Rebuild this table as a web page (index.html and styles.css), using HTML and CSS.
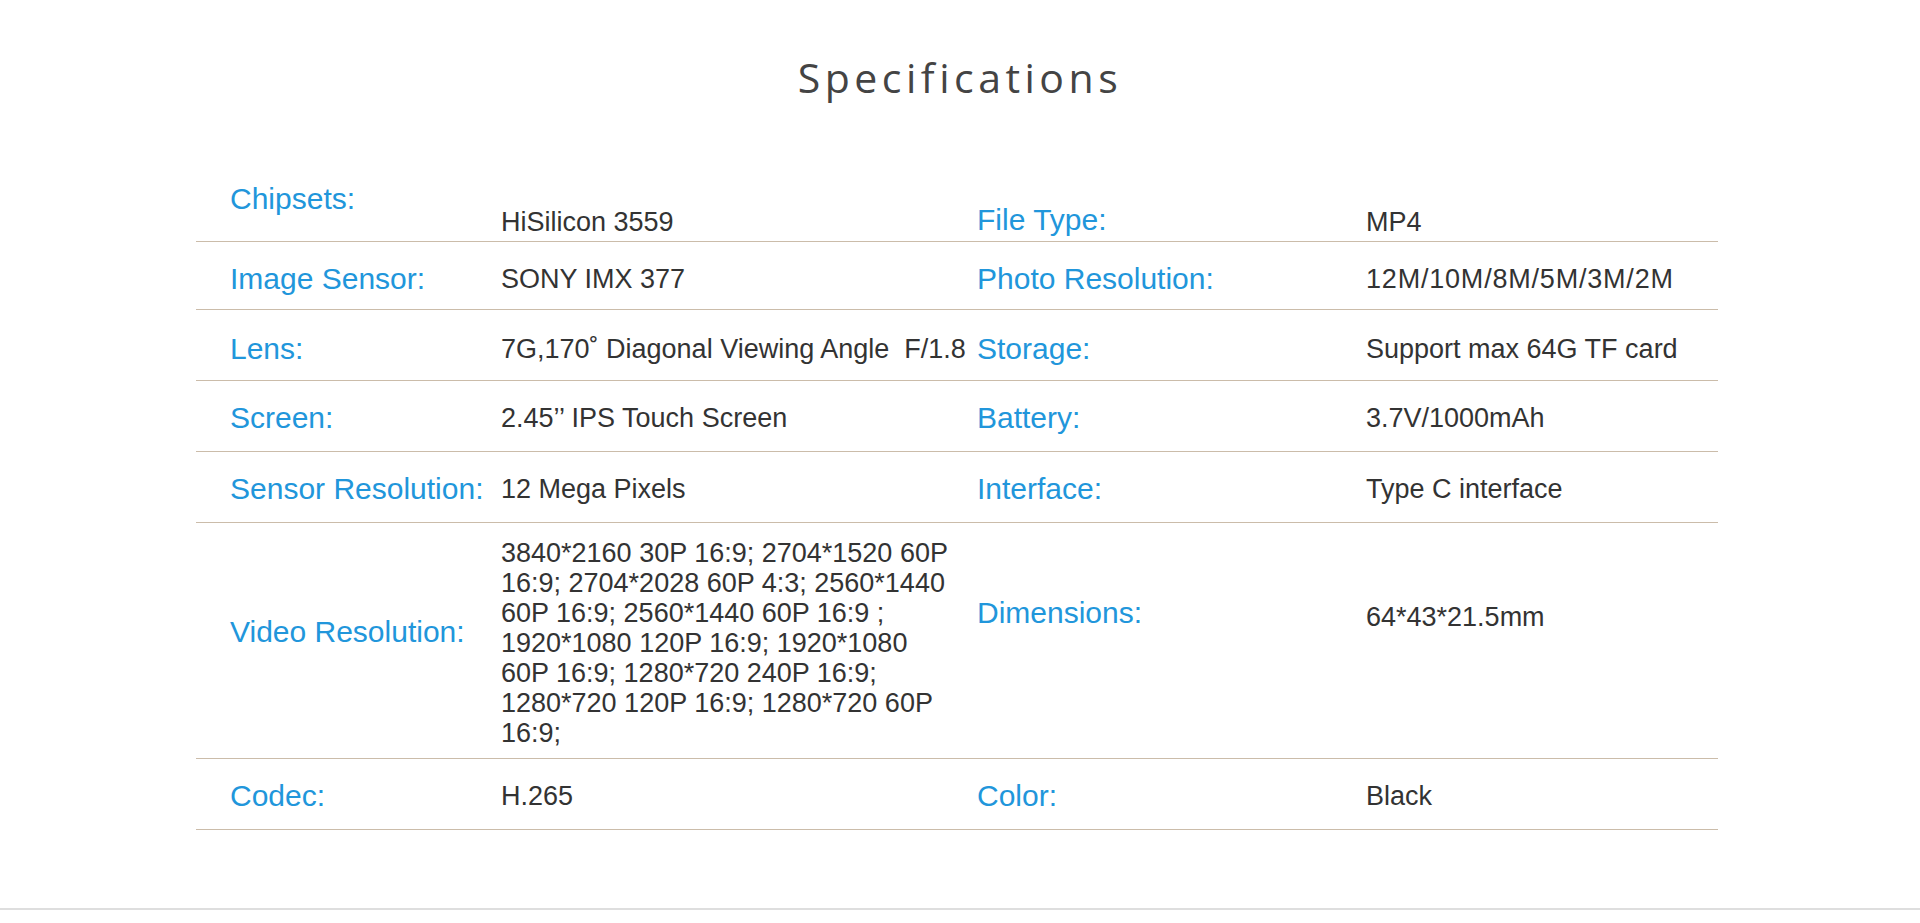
FILE: index.html
```html
<!DOCTYPE html>
<html lang="en">
<head>
<meta charset="utf-8">
<title>Specifications</title>
<link rel="stylesheet" href="styles.css">
</head>
<body>
<section class="specs">
  <h1 class="specs-title">Specifications</h1>
  <div class="spec-table">
    <div class="spec-row row-first">
      <div class="label label-high">Chipsets:</div>
      <div class="value">HiSilicon 3559</div>
      <div class="label">File Type:</div>
      <div class="value">MP4</div>
    </div>
    <div class="spec-row row-short">
      <div class="label">Image Sensor:</div>
      <div class="value">SONY IMX 377</div>
      <div class="label">Photo Resolution:</div>
      <div class="value value-wide">12M/10M/8M/5M/3M/2M</div>
    </div>
    <div class="spec-row row-low">
      <div class="label">Lens:</div>
      <div class="value nowrap">7G,170˚ Diagonal Viewing Angle &nbsp;F/1.8</div>
      <div class="label">Storage:</div>
      <div class="value">Support max 64G TF card</div>
    </div>
    <div class="spec-row">
      <div class="label">Screen:</div>
      <div class="value">2.45’’ IPS Touch Screen</div>
      <div class="label">Battery:</div>
      <div class="value">3.7V/1000mAh</div>
    </div>
    <div class="spec-row">
      <div class="label">Sensor Resolution:</div>
      <div class="value">12 Mega Pixels</div>
      <div class="label">Interface:</div>
      <div class="value">Type C interface</div>
    </div>
    <div class="spec-row row-tall">
      <div class="label label-video">Video Resolution:</div>
      <div class="value value-video">3840*2160 30P 16:9; 2704*1520 60P 16:9; 2704*2028 60P 4:3; 2560*1440 60P 16:9; 2560*1440 60P 16:9 ; 1920*1080 120P 16:9; 1920*1080 60P 16:9; 1280*720 240P 16:9; 1280*720 120P 16:9; 1280*720 60P 16:9;</div>
      <div class="label label-dim">Dimensions:</div>
      <div class="value value-dim">64*43*21.5mm</div>
    </div>
    <div class="spec-row">
      <div class="label">Codec:</div>
      <div class="value">H.265</div>
      <div class="label">Color:</div>
      <div class="value">Black</div>
    </div>
  </div>
</section>
</body>
</html>
```
FILE: styles.css
```css
* {
  box-sizing: border-box;
}

html, body {
  margin: 0;
  padding: 0;
  background: #ffffff;
}

body {
  font-family: "Liberation Sans", Arial, Helvetica, sans-serif;
}

.specs {
  padding: 57px 0 78px;
  border-bottom: 2px solid #dedede;
  box-shadow: 0 1px 0 #eeeeee;
}

.specs-title {
  margin: 0;
  text-align: center;
  font-family: "Open Sans", "Liberation Sans", sans-serif;
  font-weight: 400;
  font-size: 41px;
  line-height: 40px;
  letter-spacing: 4.5px;
  color: #444444;
}

.spec-table {
  width: 1522px;
  margin: 74px 0 0 196px;
}

.spec-row {
  display: grid;
  grid-template-columns: 271px 476px 389px 352px;
  align-items: center;
  min-height: 71px;
  padding: 4px 0 0 34px;
  border-bottom: 1px solid #cbbcaa;
}

.row-first {
  align-items: end;
  padding: 0 0 4px 34px;
}

.row-short {
  min-height: 68px;
  padding-top: 7px;
}

.row-low {
  padding-top: 8px;
}

.row-tall {
  min-height: 236px;
}

.label {
  font-size: 30px;
  line-height: 34px;
  color: #2196db;
  white-space: nowrap;
}

.value {
  font-size: 27px;
  line-height: 30px;
  color: #333333;
}

.value-wide {
  letter-spacing: 0.8px;
}

.nowrap {
  white-space: nowrap;
}

.label-high {
  margin-bottom: 21px;
}

.label-video {
  margin-bottom: 22px;
}

.value-video {
  width: 455px;
}

.label-dim {
  margin-bottom: 60px;
}

.value-dim {
  margin-bottom: 52px;
}
```
